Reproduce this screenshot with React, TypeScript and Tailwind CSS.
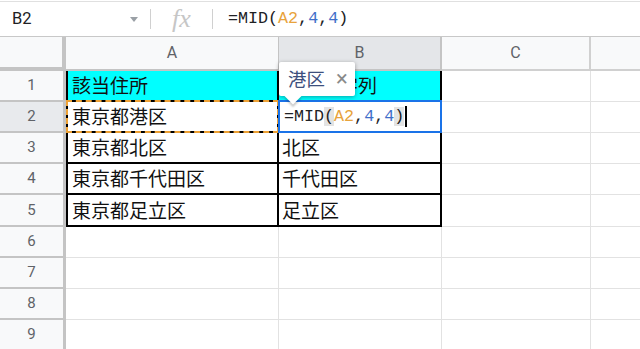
import React from "react";

const cjk = { fontFamily: '"Noto Sans CJK JP", "Noto Sans", sans-serif' };
const ui = { fontFamily: 'Roboto, "Liberation Sans", Arial, sans-serif' };
const mono = { fontFamily: '"Liberation Mono", "DejaVu Sans Mono", monospace' };

const rowsData: [string, string][] = [
  ["該当住所", "抽出文字列"],
  ["東京都港区", ""],
  ["東京都北区", "北区"],
  ["東京都千代田区", "千代田区"],
  ["東京都足立区", "足立区"],
];

function Formula({ paren }: { paren?: boolean }) {
  const p = paren ? "bg-[#e3e3e3]" : "";
  return (
    <span style={mono} className="text-[16.7px] text-[#202124] whitespace-pre">
      =MID<span className={p}>(</span>
      <span className="text-[#e8a33c]">A2</span>,<span className="text-[#3f6fc9]">4</span>,
      <span className="text-[#3f6fc9]">4</span>
      <span className={p}>)</span>
    </span>
  );
}

export default function App() {
  const rowNums = [1, 2, 3, 4, 5, 6, 7, 8, 9];
  return (
    <div className="w-[640px] h-[349px] overflow-hidden bg-white relative" style={ui}>
      {/* formula bar */}
      <div className="mt-[1px] h-[35px] border-t border-[#e0e0e0] flex items-center">
        <div className="w-[150px] flex items-center pl-[12px] pr-[12px]">
          <span className="text-[16.5px] text-[#202124] flex-1">B2</span>
          <svg width="8" height="5" viewBox="0 0 8 5">
            <path d="M0 0 L8 0 L4 5 Z" fill="#9aa0a6" />
          </svg>
        </div>
        <div className="w-[1px] h-[20px] bg-[#d0d0d0]" />
        <div className="w-[61px] flex justify-center">
          <span
            className="text-[26px] italic text-[#c6c6c6] leading-none"
            style={{ fontFamily: '"Liberation Serif", "DejaVu Serif", serif' }}
          >
            fx
          </span>
        </div>
        <div className="w-[1px] h-[20px] bg-[#d0d0d0]" />
        <div className="pl-[15px]">
          <Formula />
        </div>
      </div>

      {/* header row */}
      <div className="flex h-[35px] border-t border-[#c8c8c8]">
        <div className="w-[66px] bg-[#f8f9fa] border-r-[4px] border-b-[4px] border-[#c4c4c4]" />
        <div className="w-[213px] bg-[#f8f9fa] border-r border-b-2 border-[#c4c4c4] flex items-center justify-center text-[16px] text-[#5f6368]">
          A
        </div>
        <div className="w-[163px] bg-[#e4e6e9] border-r-2 border-b-2 border-[#c4c4c4] flex items-center justify-center text-[16px] text-[#5f6368]">
          B
        </div>
        <div className="w-[149px] bg-[#f8f9fa] border-r-2 border-b-2 border-[#d0d0d0] flex items-center justify-center text-[16px] text-[#5f6368]">
          C
        </div>
        <div className="flex-1 bg-[#f8f9fa] border-b-2 border-[#d0d0d0]" />
      </div>

      {/* rows */}
      {rowNums.map((n) => {
        const d = rowsData[n - 1];
        const inTable = !!d;
        const cyan = n === 1;
        return (
          <div key={n} className={`flex ${n === 5 ? "h-[32px]" : "h-[31px]"}`}>
            <div
              className={`w-[66px] border-r-[3px] border-b-2 border-[#c4c4c4] flex items-center justify-center text-[15px] text-[#5f6368] ${
                n === 2 ? "bg-[#e8eaed]" : "bg-[#f8f9fa]"
              }`}
            >
              {n}
            </div>
            <div
              className={`relative w-[213px] flex items-center pl-[4px] text-[19px] text-[#111] ${
                inTable ? "border-l-2 border-r-2 border-b-2 border-black" : "border-r border-b border-[#e2e2e2]"
              } ${cyan ? "bg-[#00ffff]" : ""}`}
              style={cjk}
            >
              {d ? d[0] : ""}
              {n === 2 && (
                <div className="absolute -left-[2px] -top-[2px] -right-[2px] bottom-[-2px] border-2 border-dashed border-[#eea236]" />
              )}
            </div>
            <div
              className={`relative w-[163px] flex items-center pl-[3px] text-[19px] text-[#111] ${
                inTable ? "border-r-2 border-b-2 border-black" : "border-r border-b border-[#e2e2e2]"
              } ${cyan ? "bg-[#00ffff]" : ""}`}
              style={cjk}
            >
              {d ? d[1] : ""}
              {n === 2 && (
                <div className="absolute -left-[1px] -top-[2px] -right-[2px] bottom-[-2px] border-2 border-[#1a73e8] bg-white flex items-center pl-[4px]">
                  <Formula paren />
                  <div className="w-[2px] h-[21px] bg-black ml-[1px]" />
                </div>
              )}
            </div>
            <div className="w-[149px] border-r border-b border-[#e2e2e2]" />
            <div className="flex-1 border-b border-[#e2e2e2]" />
          </div>
        );
      })}

      {/* tooltip */}
      <div className="absolute left-[279px] top-[62px] w-[76px] h-[34px] bg-white rounded-[2px] shadow-[0_1px_4px_rgba(0,0,0,0.35)] flex items-center pl-[9px]">
        <span style={cjk} className="text-[18.5px] text-[#3d4f7d]">
          港区
        </span>
        <span className="ml-[11px] text-[22px] text-[#8a8a8a] leading-none">×</span>
        <div className="absolute left-[8px] bottom-[-6px] w-[12px] h-[12px] bg-white rotate-45 shadow-[2px_2px_2px_rgba(0,0,0,0.2)]" />
      </div>
    </div>
  );
}
